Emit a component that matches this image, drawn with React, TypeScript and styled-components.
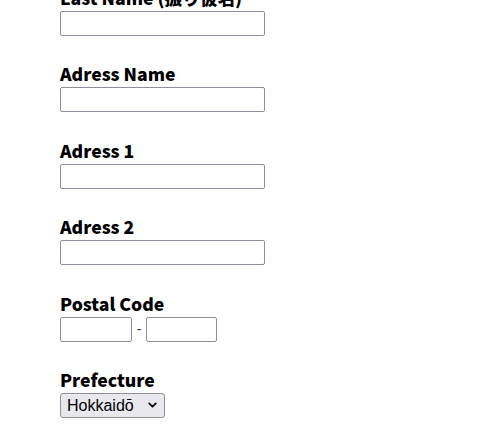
import React from "react";
import styled, { createGlobalStyle } from "styled-components";

const Global = createGlobalStyle`
  html, body { margin: 0; padding: 0; background: #fff; overflow: hidden; }
  body { font-family: "Noto Sans CJK JP", "Noto Sans", sans-serif; color: #000; }
`;

const Form = styled.form`
  display: flex;
  flex-direction: column;
  gap: 25.4px;
  padding-left: 60px;
  margin-top: -15px;
`;

const Field = styled.div`
  display: flex;
  flex-direction: column;
  align-items: flex-start;
`;

const Label = styled.label`
  font-family: "Noto Sans CJK JP", "Noto Sans", sans-serif;
  font-weight: 900;
  font-size: 17.6px;
  line-height: 26px;
`;

const TextInput = styled.input<{ $w?: number }>`
  box-sizing: border-box;
  width: ${(p) => p.$w ?? 205}px;
  height: 25px;
  border: 1px solid #8f8f9d;
  border-radius: 2px;
  padding: 1px 3px;
  font-family: "Liberation Sans", Arial, sans-serif;
  font-size: 16px;
  background: #fff;
  outline: none;
`;

const Row = styled.div`
  display: flex;
  align-items: center;
  gap: 4px;
`;

const Dash = styled.span`
  font-family: "Liberation Sans", Arial, sans-serif;
  font-size: 14px;
  color: #333;
  width: 6px;
  text-align: center;
`;

const SelectWrap = styled.div`
  position: relative;
  display: inline-flex;
`;

const Select = styled.select`
  appearance: none;
  box-sizing: border-box;
  height: 25px;
  width: 105px;
  margin: 0;
  padding: 0 24px 0 6px;
  border: 1px solid #8f8f9d;
  border-radius: 3px;
  background: #e9e9ed;
  font-family: "Liberation Sans", Arial, sans-serif;
  font-size: 16px;
  color: #000;
  outline: none;
`;

const Chevron = styled.svg`
  position: absolute;
  right: 7px;
  top: 50%;
  width: 11px;
  height: 11px;
  transform: translateY(-50%);
  pointer-events: none;
`;

export default function App() {
  return (
    <>
      <Global />
      <Form>
        <Field>
          <Label>Last Name (振り仮名)</Label>
          <TextInput type="text" />
        </Field>
        <Field>
          <Label>Adress Name</Label>
          <TextInput type="text" />
        </Field>
        <Field>
          <Label>Adress 1</Label>
          <TextInput type="text" />
        </Field>
        <Field>
          <Label>Adress 2</Label>
          <TextInput type="text" />
        </Field>
        <Field>
          <Label>Postal Code</Label>
          <Row>
            <TextInput type="text" $w={72} />
            <Dash>-</Dash>
            <TextInput type="text" $w={71} />
          </Row>
        </Field>
        <Field>
          <Label>Prefecture</Label>
          <SelectWrap>
            <Select defaultValue="hokkaido">
              <option value="hokkaido">Hokkaidō</option>
              <option value="aomori">Aomori</option>
            </Select>
            <Chevron viewBox="0 0 10 10">
              <path d="M2 3.5 L5 6.5 L8 3.5" fill="none" stroke="#000" strokeWidth="1.5" strokeLinecap="round" strokeLinejoin="round" />
            </Chevron>
          </SelectWrap>
        </Field>
      </Form>
    </>
  );
}
